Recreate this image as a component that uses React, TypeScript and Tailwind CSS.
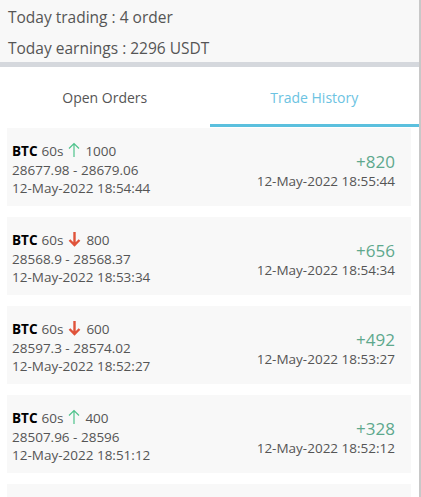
import React from "react";

type Trade = {
  amount: string;
  up: boolean;
  range: string;
  open: string;
  profit: string;
  close: string;
};

const trades: Trade[] = [
  { amount: "1000", up: true, range: "28677.98 - 28679.06", open: "12-May-2022 18:54:44", profit: "+820", close: "12-May-2022 18:55:44" },
  { amount: "800", up: false, range: "28568.9 - 28568.37", open: "12-May-2022 18:53:34", profit: "+656", close: "12-May-2022 18:54:34" },
  { amount: "600", up: false, range: "28597.3 - 28574.02", open: "12-May-2022 18:52:27", profit: "+492", close: "12-May-2022 18:53:27" },
  { amount: "400", up: true, range: "28507.96 - 28596", open: "12-May-2022 18:51:12", profit: "+328", close: "12-May-2022 18:52:12" },
];

function UpArrow() {
  return (
    <svg width="12" height="16" viewBox="0 0 12 16" className="inline-block mx-[5px] -mt-[3px]">
      <path d="M6 15V1.5M1 6.5L6 1.5L11 6.5" stroke="#4fc38c" strokeWidth="1.2" fill="none" />
    </svg>
  );
}

function DownArrow() {
  return (
    <svg width="13" height="16" viewBox="0 0 13 16" className="inline-block mx-[5px] -mt-[3px]">
      <path d="M6.5 1V14M1.5 9L6.5 14L11.5 9" stroke="#e0533a" strokeWidth="2.4" fill="none" />
    </svg>
  );
}

export default function App() {
  return (
    <div
      className="w-[421px] h-[497px] overflow-hidden bg-white flex"
      style={{ fontFamily: '"Open Sans", "Noto Sans", sans-serif' }}
    >
      <div className="w-[419px] shrink-0 flex flex-col">
        <div className="shrink-0 bg-[#f8f8f8] h-[62px] pl-[8px] flex flex-col text-[15.5px] text-[#555555]">
          <div className="h-[31px] leading-[31px] pt-[2px]">Today trading : 4 order</div>
          <div className="h-[31px] leading-[31px] pt-[2px]">Today earnings : 2296 USDT</div>
        </div>
        <div className="shrink-0 h-[5px] bg-[#d5d8dd]" />
        <div className="shrink-0 flex h-[60px] text-[14px]">
          <div className="flex-1 flex items-center justify-center text-[#555555]">Open Orders</div>
          <div className="flex-1 flex items-center justify-center text-[#6cc3e2] border-b-[3px] border-[#5bc0de] pt-[3px]">
            Trade History
          </div>
        </div>
        <div className="shrink-0 flex flex-col gap-[11px] pl-[7px] pr-[8px] pt-[1px]">
          {trades.map((t, i) => (
            <div key={i} className="shrink-0 bg-[#f8f8f8] h-[78px] pl-[5px] pr-[16px] flex items-center justify-between">
              <div className="flex flex-col text-[13.5px] leading-[18.5px] text-[#555555] pt-[6px]">
                <div className="flex items-center">
                  <span className="font-bold text-black">BTC</span>
                  <span className="ml-[4px]">60s</span>
                  {t.up ? <UpArrow /> : <DownArrow />}
                  <span>{t.amount}</span>
                </div>
                <div>{t.range}</div>
                <div>{t.open}</div>
              </div>
              <div className="flex flex-col items-end pt-[8px]">
                <div className="text-[17px] leading-[20px] text-[#5ea88d]">{t.profit}</div>
                <div className="text-[13.5px] leading-[19px] text-[#555555]">{t.close}</div>
              </div>
            </div>
          ))}
          <div className="shrink-0 bg-[#f8f8f8] h-[78px]" />
        </div>
      </div>
      <div className="w-[2px] shrink-0 h-full bg-[#c8c8c8]" />
    </div>
  );
}
